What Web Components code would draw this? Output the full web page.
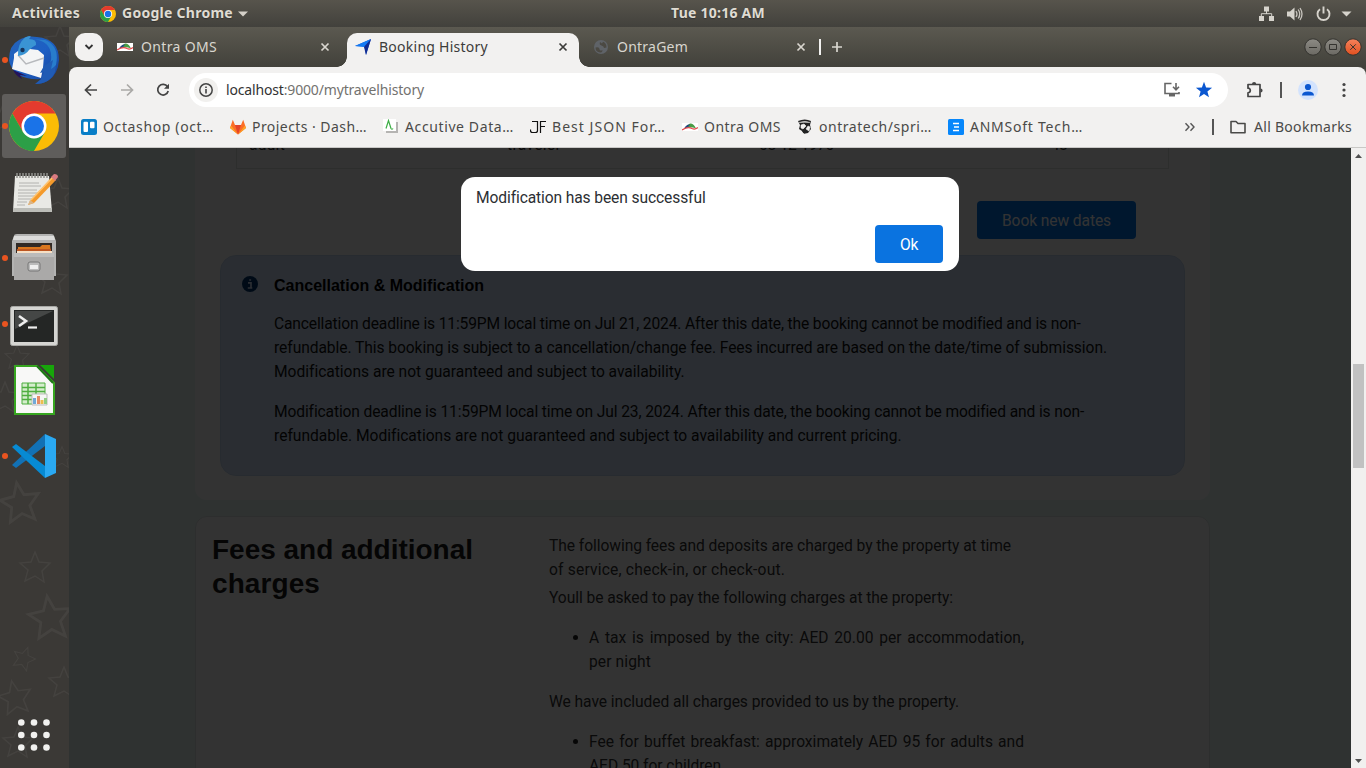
<!DOCTYPE html>
<html lang="en"><head><meta charset="utf-8"><title>Booking History</title>
<style>
html,body{margin:0;height:100%;overflow:hidden;background:#2f3231}
</style></head><body>
<desk-top></desk-top>
<script>
const fits=[];
const make=(name,html)=>{const t=document.createElement('template');t.innerHTML=html;
 customElements.define(name,class extends HTMLElement{constructor(){super();this.attachShadow({mode:'open'}).append(t.content.cloneNode(true));}});};

// One line of text, tracked to the width given in "w"; with "justify" only the word gaps stretch.
// --dy nudges the baseline to suit the font in use.
customElements.define('fit-text',class extends HTMLElement{
 constructor(){super();this.attachShadow({mode:'open'}).innerHTML='<style>:host{display:block;white-space:nowrap;flex:none}span{display:inline-block;transform:translateY(var(--dy,0px))}</style><span><slot></slot></span>';}
 connectedCallback(){this.style.width=this.getAttribute('w')+'px';fits.push(this);}
 fit(){const s=this.shadowRoot.querySelector('span'),t=this.textContent,w=+this.getAttribute('w'),d=w-s.getBoundingClientRect().width;
  if(this.hasAttribute('justify'))s.style.wordSpacing=d/(t.split(' ').length-1)+'px';else s.style.letterSpacing=d/t.length+'px';}
});

const chrome=`<svg viewBox="0 0 48 48" width="100%" height="100%"><circle cx="24" cy="24" r="24" fill="#fbbc05"/><path d="M3.2 12A24 24 0 0 1 44.8 12H24v12L13.6 30z" fill="#e33b2e"/><path d="M24 48 34.4 30 24 24 13.6 30 3.2 12A24 24 0 0 0 24 48z" fill="#2c9f47"/><circle cx="24" cy="24" r="12" fill="#fff"/><circle cx="24" cy="24" r="9.6" fill="#1a73e8"/></svg>`;
const ontra=`<svg width="16" height="16" viewBox="0 0 16 16"><path d="M0 4h16v8H0z" fill="#fff"/><path d="M3 9.500Q7 4 9 4.500Q12 5 14 9.500Q8 7 3 9.500z" fill="#4a9c46"/><path d="M2 10Q4 5 8 5.500L6 8z" fill="#21477f"/><path d="M0 11Q6 7 10 9.500Q13 11 16 8.500" fill="none" stroke="#e4474b" stroke-width="1.200"/></svg>`;

make('top-bar',`<style>:host{--dy:-1px;display:flex;align-items:center;height:27px;box-sizing:border-box;padding-left:12px;background:linear-gradient(#57544c,#42413c);font:bold 14px "Noto Sans",sans-serif;color:#dfdbd2;text-shadow:0 1px 1px #2228}
.c{width:16px;height:16px;margin:0 6px 0 20px;line-height:0}.clock{margin-left:422px}.sys{margin-left:auto;line-height:0;padding-right:14px}</style>
<fit-text w="68">Activities</fit-text><div class="c">${chrome}</div><fit-text w="111">Google Chrome</fit-text>
<svg width="12" height="8" style="margin-left:4px"><path d="M1 1.500h10L6 6.500z" fill="#d4d0c8"/></svg>
<fit-text class="clock" w="94">Tue 10:16 AM</fit-text>
<svg class="sys" width="94" height="20" viewBox="0 0 94 20"><g transform="translate(.5 0)" fill="#d6d3cc"><path d="M5.500 2.500h5v5h-5zM.500 12h5v5h-5zM10.500 12h5v5h-5z"/><path d="M8 7v3M2.800 12V9.700h10.400V12" fill="none" stroke="#d6d3cc"/><path d="M28.500 7.500h3L36 3.500v13l-4.500-4h-3z"/><path d="M37.500 7q2 3 0 6M39.700 5.500q3 4.500 0 9M41.500 4q4 6 0 12" fill="none" stroke="#c9c6bf" stroke-width="1.300"/><path d="M61.500 5.200a6 6 0 1 0 7 0M65 2.500v7" fill="none" stroke="#d6d3cc" stroke-width="1.900"/><path d="M83 7.500h10l-5 5z"/></g></svg>`);

make('dock-item',`<style>:host{display:flex;position:relative;height:64px;width:64px;margin-left:2px;border-radius:3px;align-items:center;justify-content:center}:host([on]){background:#5f5d5b}:host([run])::before{content:"";position:absolute;left:0;top:29px;width:6px;height:6px;border-radius:3px;background:#e95420}</style><slot></slot>`);

const star='M0-15 4-5 15-4 7 4 9 15 0 9-10 14-7 3-15-4-4-5z';
make('side-dock',`<style>:host{display:grid;grid-template-rows:repeat(7,64px) 1fr;row-gap:2px;position:relative;width:69px;box-sizing:border-box;padding-top:1px;background:#3b3936;overflow:hidden}
.bg{position:absolute;left:0;top:0}.apps{align-self:end;margin:0 0 15px 16px}svg{display:block}dock-item,.apps{position:relative}</style>
<svg class="bg" width="69" height="741"><g fill="none" stroke="#484643" stroke-width="1.500" opacity=".75"><path transform="translate(20 475) rotate(-10) scale(1.300)" d="${star}" stroke-width="2.200"/><path transform="translate(62 430) scale(.7)" d="${star}"/><path transform="translate(35 540)" d="${star}"/><path transform="translate(50 590) rotate(-8) scale(1.400)" stroke-width="2" d="${star}"/><path transform="translate(24 631) scale(.75) rotate(20)" d="${star}"/><path transform="translate(15 670) rotate(-12) scale(1.100)" d="${star}"/><path transform="translate(64 655) scale(1)" d="${star}"/><path transform="translate(18 715)" d="${star}"/><path transform="translate(52 252)" d="${star}"/><path transform="translate(17 330) scale(.8)" d="${star}"/><path transform="translate(4 90)" d="${star}"/><path transform="translate(60 14)" d="${star}"/><path transform="translate(5 370)" d="${star}"/><path transform="translate(58 166)" d="${star}"/></g></svg>
<dock-item run><svg width="50" height="50" viewBox="0 0 50 50"><defs><linearGradient id="g" x1="0" x2="1" y1="0" y2="1"><stop stop-color="#2463b8"/><stop offset=".5" stop-color="#1d5fc4"/><stop offset="1" stop-color="#173f94"/></linearGradient></defs><path d="M0 25Q0 10 10 5Q18 0 28 2Q50 4 50 25Q49 39 40 45Q34 49 27 49L33 44Q18 45 10 40Q1 34 0 25z" fill="url(#g)"/><path d="M22 4Q44 5 42 25L36 42 47 30Q51 11 36 5z" fill="#287dcc"/><path d="M5 19 13 13 29 15 35 20 34 33 32 43 3 34 5 23z" fill="#f4f5f6"/><path d="M9 20 17 29 35 23" fill="none" stroke="#b7b9bd" stroke-width="1.500"/><path d="M9 21Q8 9 16 2.500Q20 0 22 1.500L20 4Q28 4 27 10Q23 12 20 15Q17 20 9 21z" fill="#3a94d4"/><circle cx="13.500" cy="15" r="2.200" fill="#17345c"/><path d="M4 35 18 41 11 40 13 44Q7 41 4 35z" fill="#23135b"/><path d="M35 31l-4 7 4-1-3 7-6 5Q41 49 46 37l1-6-5 3 2-9z" fill="#205bb4"/></svg></dock-item>
<dock-item run on><div style="width:50px;height:50px;line-height:0">${chrome}</div></dock-item>
<dock-item><svg width="50" height="48" viewBox="0 0 50 48"><path d="M6 8h34l3 36H4z" fill="#e9e9e5"/><path d="M4 40h39v4H4z" fill="#bcbdb8"/><path d="M8 5v5M11 5v5M14 5v5M17 5v5M20 5v5M23 5v5M26 5v5M29 5v5M32 5v5M35 5v5M38 5v5" stroke="#92938f" stroke-width="1.500"/><path d="M10 15h20M10 18h22M9 22h19M9 25h20M9 28h17M9 31h16M8 34h10M8 37h8" stroke="#b2b2af" stroke-width="1"/><path d="M21 33 43 9 47 12 25 35 19 37z" fill="#f49a2b"/><path d="M22 32 44 9" stroke="#ffc46f" stroke-width="1.500"/><path d="M42 9 45 6Q49 6 49 9L46 13z" fill="#d97b80"/><path d="M19 37l2-5 4 3z" fill="#d9b589"/></svg></dock-item>
<dock-item run><svg width="46" height="50" viewBox="0 0 46 50"><path d="M3 3Q3 1 6 1h34q3 0 3 2l2 5v35h-44V8z" fill="#b3b3b2"/><path d="M3 3h40l1 4H2z" fill="#dcdcdb"/><path d="M5 10h36v12H5z" fill="#312a26"/><path d="M7 14h22l2-2h8l1 8H7z" fill="#da771f"/><path d="M6 16h34v5H6z" fill="#bd5622"/><path d="M6 18h35v3H6z" fill="#f5dfc5"/><path d="M3 20h40v27H3z" fill="#aaa9a8"/><path d="M3 20h40v4H3z" fill="#bbb"/><rect x="17" y="29" width="12" height="9" rx="2" fill="#bbb" stroke="#777"/><path d="M19 32h8v4h-8z" fill="#efefef"/></svg></dock-item>
<dock-item run><svg width="48" height="40" viewBox="0 0 48 40" style="margin-top:4px"><rect x=".5" y=".5" width="47" height="39" rx="2" fill="#d5d5d2" stroke="#a8a8a5"/><path d="M4 4h40v32H4z" fill="#242625"/><path d="M5 5h38L5 23z" fill="#454746"/><path d="M9 10l7 5-7 5" fill="none" stroke="#eee" stroke-width="2.600"/><path d="M18 21.500h9" stroke="#eee" stroke-width="2.200"/></svg></dock-item>
<dock-item><svg width="42" height="52" viewBox="0 0 42 52"><path d="M2 2h22l17 17v31H2z" fill="#f8f8f7" stroke="#36a51f" stroke-width="2"/><path d="M27 1h14v14z" fill="#17a60a"/><path d="M24 2 40 19" stroke="#1e7617" stroke-width="2"/><path d="M9 19h23v21H9z" fill="#d5edcd" stroke="#4fae40"/><path d="M9 23.500h23M9 27.500h23M9 31.500h23M9 35.500h23M15 19v21M23 19v21" stroke="#4fae40" stroke-width="1.500"/><path d="M19 30h15v11H19z" fill="#f6f6f5" stroke="#bbb"/><path d="M20 34h3v6h-3z" fill="#72a9d8"/><path d="M24 32h3v8h-3z" fill="#e58b65"/><path d="M27.500 36h3v4h-3z" fill="#edbd4d"/><path d="M31 34h3v6h-3z" fill="#91ce82"/></svg></dock-item>
<dock-item run><svg width="44" height="44" viewBox="0 0 44 44"><path d="M0 31 33 0v12L4 34z" fill="#1271b5"/><path d="M0 13 4 10 33 32v12z" fill="#078ad3"/><path d="M33 0 44 5v34L33 44z" fill="#2aa9f2"/></svg></dock-item>
<svg class="apps" width="36" height="36"><g fill="#f1f1ef"><circle cx="5.300" cy="5.500" r="3.300"/><circle cx="18" cy="5.500" r="3.300"/><circle cx="30.500" cy="5.500" r="3.300"/><circle cx="5.300" cy="18" r="3.300"/><circle cx="18" cy="18" r="3.300"/><circle cx="30.500" cy="18" r="3.300"/><circle cx="5.300" cy="30.500" r="3.300"/><circle cx="18" cy="30.500" r="3.300"/><circle cx="30.500" cy="30.500" r="3.300"/></g></svg>`);

make('browser-tab',`<style>:host{display:flex;position:relative;align-items:center;width:232px;height:28px;box-sizing:border-box;padding:0 11px 0 8px;color:#d9d6cf;margin-right:6px}
:host([on]){background:#f2f1f0;height:34px;padding-bottom:6px;border-radius:10px 10px 0 0;color:#3c3c3a}
:host([on])::before,:host([on])::after{content:"";position:absolute;bottom:0;width:10px;height:10px;left:-10px;background:radial-gradient(circle at 0 0,transparent 9.500px,#f2f1f0 10px)}
:host([on])::after{left:232px;background:radial-gradient(circle at 100% 0,transparent 9.500px,#f2f1f0 10px)}
.i{width:16px;height:16px;margin-right:8px;line-height:0}.x{margin-left:auto}</style><div class="i"><slot name="icon"></slot></div><slot></slot><svg class="x" width="10" height="10"><path d="M1.500 1.500l7 7m0-7l-7 7" stroke="currentColor" stroke-width="1.700"/></svg>`);

make('tab-strip',`<style>:host{--dy:-1px;display:flex;height:40px;box-sizing:border-box;padding:6px 4px 0 6px;background:linear-gradient(#5b5950,#42413b);font:14px "Noto Sans",sans-serif}
.s{width:28px;height:28px;border-radius:10px;background:#f2f1f0;display:grid;place-items:center;margin-right:6px}.sep{width:2px;height:16px;background:#f2f1f0;margin:6px 10px 0 -4px}.plus{margin-top:8px}.w{margin:5px 0 0 auto}</style>
<div class="s"><svg width="10" height="8"><path d="M1.500 2 5 5.500 8.500 2" fill="none" stroke="#333" stroke-width="1.800"/></svg></div>
<browser-tab><span slot="icon">${ontra}</span><fit-text w="76">Ontra OMS</fit-text></browser-tab>
<browser-tab on><svg slot="icon" width="16" height="16"><path d="M0 7 16 0 11 16 9.500 7.500z" fill="#1550d0"/><path d="M0 7 16 0 9 8z" fill="#147bf3"/><path d="M16 0 11 16 9 8z" fill="#102c91"/></svg><fit-text w="109">Booking History</fit-text></browser-tab>
<browser-tab><svg slot="icon" width="16" height="16"><circle cx="8" cy="8" r="7" fill="#5f6368"/><path d="M2.500 8.500q4-1 4 1.500t3 1q0 3-2.500 2.500Q2.500 13 2.500 8.500zM7 3q-1 3 1.500 3.500T11 9l2.500-.5Q13.500 4 10 2.800L9 4.500z" fill="#4b4943"/></svg><fit-text w="71">OntraGem</fit-text></browser-tab>
<div class="sep"></div><svg class="plus" width="12" height="12"><path d="M6 1v10M1 6h10" stroke="#d9d6cf" stroke-width="1.700"/></svg>
<svg class="w" width="58" height="18"><defs><linearGradient id="a" x2="0" y2="1"><stop stop-color="#8d8b85"/><stop offset="1" stop-color="#6b6963"/></linearGradient><linearGradient id="b" x2="0" y2="1"><stop stop-color="#f4825c"/><stop offset="1" stop-color="#e2501f"/></linearGradient></defs><g stroke="#34332f"><circle cx="9" cy="9" r="8.200" fill="url(#a)"/><circle cx="29" cy="9" r="8.200" fill="url(#a)"/><circle cx="49" cy="9" r="8.200" fill="url(#b)"/><path d="M5 9.500h8M25.500 6.500h7v5h-7zM46.300 6.300l5.500 5.500m0-5.500l-5.500 5.500" fill="none"/></g></svg>`);

make('tool-bar',`<style>:host{--dy:-1px;display:flex;align-items:center;height:40px;box-sizing:border-box;background:#f2f1f0;border-radius:8px 8px 0 0;padding:6px 13px 0 13px;font:14px "Noto Sans",sans-serif;color:#73726f}
svg{display:block;flex:none}.nav{display:flex;gap:18px;width:107px}.pill{display:flex;align-items:center;box-sizing:border-box;width:1039px;height:34px;border-radius:17px;background:#fff;padding:0 15px 0 5px}.info{width:24px;height:24px;border-radius:12px;background:#f1f0ee;display:grid;place-items:center;margin-right:8px}b{font-weight:400;color:#333}.r{display:flex;gap:14px;margin-left:auto}</style>
<div class="nav"><svg width="18" height="18"><path d="M15 9H4M9 3.500 3.500 9 9 14.500" fill="none" stroke="#444" stroke-width="1.700"/></svg><svg width="18" height="18"><path d="M3 9h11M9 3.500 14.500 9 9 14.500" fill="none" stroke="#aaa9a7" stroke-width="1.700"/></svg><svg width="18" height="18"><path d="M13.500 5.800A5.300 5.300 0 1 0 14.200 10" fill="none" stroke="#444" stroke-width="1.700"/><path d="M15 2.800v5h-5z" fill="#444"/></svg></div>
<div class="pill"><div class="info"><svg width="16" height="16"><circle cx="8" cy="8" r="6.200" fill="none" stroke="#444" stroke-width="1.500"/><path d="M8 7v4.500M8 4.400v1.600" stroke="#444" stroke-width="1.600"/></svg></div><fit-text w="198"><b>localhost</b>:9000/mytravelhistory</fit-text>
<div class="r"><svg width="18" height="18"><path d="M8.500 2.500H2v10h14V11" fill="none" stroke="#666" stroke-width="1.600"/><path d="M6 13h6v2.500H6z" fill="#666"/><path d="M13 2v6M10 5.800l3 3 3-3" fill="none" stroke="#666" stroke-width="1.600"/></svg><svg width="18" height="18"><path d="M9 .8l2.100 5.700 6 .2-4.700 3.700 1.600 5.900-5-3.400-5 3.400 1.600-5.900L.9 6.700l6-.2z" fill="#0b57d0"/></svg></div></div>
<svg width="18" height="18" style="margin-left:17px"><path d="M3 3.500h12v12H3v-3.700q2.300 0 2.300-2.300T3 7.200z" fill="none" stroke="#444" stroke-width="1.700" stroke-linejoin="round"/><path d="M7 3a2.100 2.100 0 0 1 4.200 0zM15.500 7.400a2.100 2.100 0 0 1 0 4.200z" fill="#444"/></svg>
<svg width="2" height="16" style="margin-left:17px"><path d="M0 0h2v16H0z" fill="#555"/></svg>
<svg width="20" height="20" style="margin-left:16px"><circle cx="10" cy="10" r="10" fill="#d3e3fd"/><circle cx="10" cy="7" r="3.100" fill="#0b57d0"/><path d="M4 15.500q0-4 6-4t6 4z" fill="#0b57d0"/></svg>
<svg width="6" height="18" style="margin-left:auto;margin-right:6px"><g fill="#444"><circle cx="3" cy="3.500" r="1.600"/><circle cx="3" cy="9" r="1.600"/><circle cx="3" cy="14.500" r="1.600"/></g></svg>`);

make('book-mark',`<style>:host{display:flex;align-items:center;gap:6px}::slotted(.i){width:16px;height:16px;line-height:0}</style><slot></slot>`);
make('bookmarks-bar',`<style>:host{--dy:-1px;display:flex;align-items:center;height:41px;box-sizing:border-box;padding:0 14px 0 12px;gap:16px;background:#f2f1f0;border-bottom:1px solid #c9c8c6;font:14px "Noto Sans",sans-serif;color:#4a4a48}svg,span.i{position:relative;top:-.5px}span.i svg{top:0}</style>
<book-mark><svg class="i" width="16" height="16"><rect width="16" height="16" rx="2.500" fill="#087ec7"/><rect x="2.500" y="2.700" width="4.500" height="10.300" rx="1" fill="#fff"/><rect x="9" y="2.700" width="4.500" height="6.500" rx="1" fill="#fff"/></svg><fit-text w="111">Octashop (oct…</fit-text></book-mark>
<book-mark><svg class="i" width="16" height="16"><path d="M0 9 2.800.8 5 6h6L13.200.8 16 9 8 15.500z" fill="#fc6d26"/><path d="M5 6h6L8 15.500z" fill="#e24329"/><path d="M0 9l1-2.500L8 15.500zM16 9l-1-2.500L8 15.500z" fill="#fca326"/></svg><fit-text w="115">Projects · Dash…</fit-text></book-mark>
<book-mark><svg class="i" width="16" height="16"><path d="M3 3h12v11H3z" fill="#b5b4b2"/><path d="M0 0h13v12H0z" fill="#fff"/><path d="M3 9.500 5.500 1.500l2.500 8q1 1.500 2 0" fill="none" stroke="#3dae45" stroke-width="1.200"/></svg><fit-text w="109">Accutive Data…</fit-text></book-mark>
<book-mark><svg class="i" width="16" height="16"><path d="M2 2.500h5.500v9q0 2-2 2H2.500q-2 0-2-2v-1M16 2.500H10.500V14M10.500 7.500H15" fill="none" stroke="#111" stroke-width="1.200"/></svg><fit-text w="114">Best JSON For…</fit-text></book-mark>
<book-mark><span class="i">${ontra}</span><fit-text w="77">Ontra OMS</fit-text></book-mark>
<book-mark><svg class="i" width="16" height="16"><path d="M1 2Q8-1 14 2l-1 4 1 4-3 4-5 1-1-3-3-2 1-4z" fill="#222"/><path d="M2 3.500q6-2 11 0M4 6l3-1 2 2-3 3-2-1zM9 10l2-3 2 1-1 4zM4 12l3 3h-3z" fill="#f2f1f0" stroke="#f2f1f0" stroke-width=".6"/></svg><fit-text w="113">ontratech/spri…</fit-text></book-mark>
<book-mark><svg class="i" width="16" height="16"><rect width="16" height="16" rx="1.500" fill="#0787fb"/><path d="M5 4.500h6M6 8h5M5 11.500h6" stroke="#fff" stroke-width="1.500"/></svg><fit-text w="113">ANMSoft Tech…</fit-text></book-mark>
<svg width="12" height="10" style="margin-left:auto"><path d="M1.500 1.200 5 5 1.500 8.800M6.500 1.200 10 5 6.500 8.800" fill="none" stroke="#555" stroke-width="1.400"/></svg>
<svg width="2" height="16"><path d="M0 0h2v16H0z" fill="#555"/></svg>
<book-mark><svg class="i" width="16" height="16"><path d="M1 2.500h5l2 2h7v9.300H1z" fill="none" stroke="#4a4a48" stroke-width="1.600" stroke-linejoin="round"/></svg><fit-text style="margin-left:2px" w="98">All Bookmarks</fit-text></book-mark>`);

make('ui-button',`<style>:host{--dy:1px;display:flex;align-items:center;justify-content:center;height:38px;border-radius:4px;background:#0a73e0;color:#fff}</style><slot></slot>`);

make('traveler-row',`<style>:host{display:grid;grid-template-columns:258px 252px 293px 1fr;line-height:24px;box-sizing:border-box;width:933px;margin-left:41px;padding:0 0 0 12px;height:21px;border:1px solid #dfe3e2;border-top:0;align-items:start}fit-text{margin-top:-15px}</style>
<fit-text w="36">adult</fit-text><fit-text w="54">traveler</fit-text><fit-text w="75">08-12-1970</fit-text><fit-text w="14">18</fit-text>`);

make('policy-panel',`<style>:host{--dy:1px;display:flex;width:965px;height:221px;box-sizing:border-box;margin:16px 0 0 25px;padding:17px 0 0 21px;border-radius:16px;background:#d2e1f9;border:1px solid #c4d7ef;line-height:24px;color:#111}
svg{margin-top:3px;flex:none}.t{margin-left:16px}h4{margin:0 0 14px;font:bold 16px/24px "Liberation Sans",sans-serif;color:#000}.p{margin-bottom:16px}</style>
<svg width="16" height="16"><circle cx="8" cy="8" r="8" fill="#00366f"/><path d="M6 6.800h3V11.500M5.800 12h4.500M7.200 4h1.900" fill="none" stroke="#d2e1f9" stroke-width="1.700"/></svg>
<div class="t"><h4><fit-text w="210">Cancellation &amp; Modification</fit-text></h4>
<div class="p"><fit-text w="806">Cancellation deadline is 11:59PM local time on Jul 21, 2024. After this date, the booking cannot be modified and is non-</fit-text><fit-text w="833">refundable. This booking is subject to a cancellation/change fee. Fees incurred are based on the date/time of submission.</fit-text><fit-text w="410">Modifications are not guaranteed and subject to availability.</fit-text></div>
<div class="p"><fit-text w="809">Modification deadline is 11:59PM local time on Jul 23, 2024. After this date, the booking cannot be modified and is non-</fit-text><fit-text w="627">refundable. Modifications are not guaranteed and subject to availability and current pricing.</fit-text></div></div>`);

make('fees-card',`<style>:host{--dy:1px;display:flex;width:1015px;height:300px;box-sizing:border-box;margin-top:16px;padding:16px;border:1px solid #dfe6e4;border-radius:12px;background:#fff;line-height:24px}
h2{--dy:0px;margin:0;width:337px;font:bold 28px/33.600px "Liberation Sans",sans-serif;color:#1c1c1c}.y{margin-top:4px}ul{margin:16px 0;padding-left:40px}li::marker{color:#222}</style>
<h2><fit-text w="261">Fees and additional</fit-text><fit-text w="108">charges</fit-text></h2>
<div><fit-text w="462">The following fees and deposits are charged by the property at time</fit-text><fit-text w="236">of service, check-in, or check-out.</fit-text><fit-text class="y" w="404">Youll be asked to pay the following charges at the property:</fit-text>
<ul><li><fit-text justify w="435">A tax is imposed by the city: AED 20.00 per accommodation,</fit-text><fit-text w="62">per night</fit-text></li></ul>
<fit-text w="410">We have included all charges provided to us by the property.</fit-text>
<ul><li><fit-text justify w="435">Fee for buffet breakfast: approximately AED 95 for adults and</fit-text><fit-text w="132">AED 50 for children</fit-text></li></ul></div>`);

make('alert-dialog',`<style>:host{position:absolute;left:392px;top:29px;display:flex;flex-direction:column;justify-content:space-between;width:498px;height:94px;box-sizing:border-box;border-radius:14px;background:#fff;padding:9px 16px 8px 15px;color:#2c2f33;line-height:24px}ui-button{width:68px;align-self:flex-end}</style>
<fit-text w="229">Modification has been successful</fit-text><ui-button><fit-text w="18">Ok</fit-text></ui-button>`);

make('page-view',`<style>:host{display:flex;position:relative;height:620px;overflow:hidden;background:#f1f0ef;font:15.600px Roboto,sans-serif;color:#333}
.page{width:1282px;box-sizing:border-box;padding-left:126px;background:#ebfaf5}.card{width:1015px;height:352px;background:#fff;border-radius:0 0 12px 12px}
ui-button.b{width:159px;margin:32px 0 0 782px;background:#0073e6}.shade{position:absolute;inset:0 15px 0 0;background:rgba(0,0,0,.8)}
.bar{width:15px;display:flex;flex-direction:column;align-items:center}.thumb{width:11px;height:104px;background:#c1c1c1;margin-top:203px}svg{flex:none}</style>
<div class="page"><div class="card"><traveler-row></traveler-row><ui-button class="b"><fit-text w="109">Book new dates</fit-text></ui-button><policy-panel></policy-panel></div><fees-card></fees-card></div>
<div class="bar"><svg width="15" height="13"><path d="M4 10h7L7.500 6z" fill="#505050"/></svg><div class="thumb"></div><svg width="15" height="15" style="margin-top:auto"><path d="M4 6h7L7.500 10z" fill="#505050"/></svg></div>
<div class="shade"></div><alert-dialog></alert-dialog>`);

make('desk-top',`<style>:host{display:grid;grid-template:27px 741px/69px 1297px;width:1366px;height:768px;overflow:hidden;background:#42413b}top-bar{grid-column:1/3}.win{min-width:0}</style>
<top-bar></top-bar><side-dock></side-dock><div class="win"><tab-strip></tab-strip><tool-bar></tool-bar><bookmarks-bar></bookmarks-bar><page-view></page-view></div>`);
fits.forEach(f=>f.fit());
</script></body></html>
